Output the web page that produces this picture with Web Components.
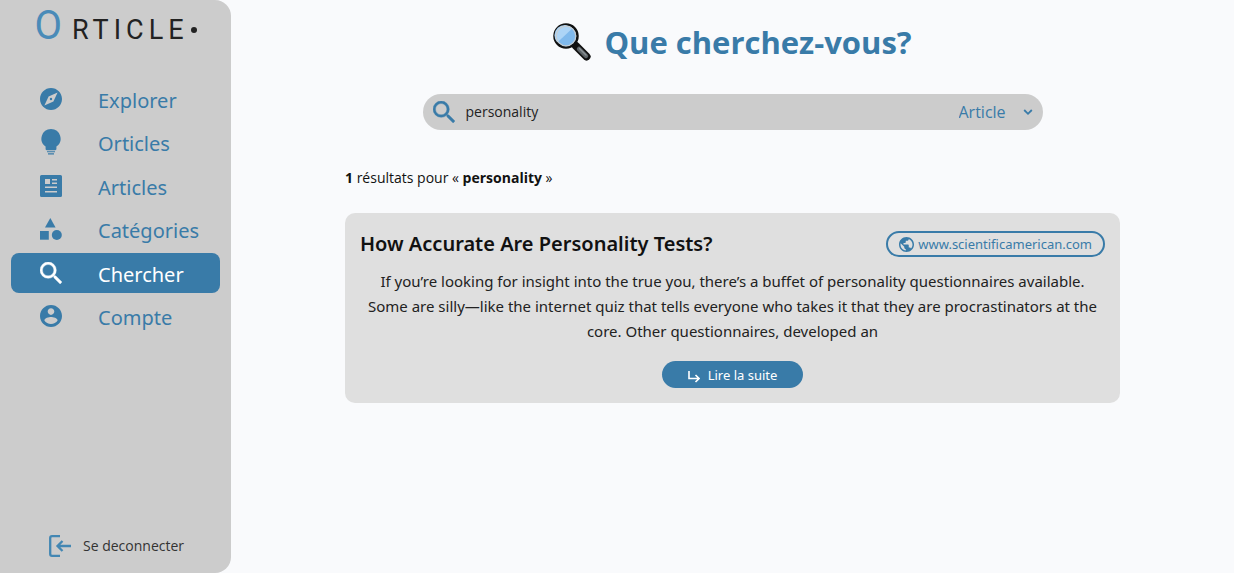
<!DOCTYPE html>
<html lang="fr">
<head>
<meta charset="utf-8">
<meta name="viewport" content="width=device-width, initial-scale=1">
<title>Orticle – Chercher</title>
<style>
  body { margin: 0; font-family: "Noto Sans", "Open Sans", sans-serif; color: #111; background: #f9fafc; --accent: #397ba8; --panel: #ccc; }
</style>
</head>
<body>
<orticle-app></orticle-app>
<script>
const ICONS = {
  explore: ['2 2 20 20', '<path d="M12 10.9a1.1 1.1 0 1 0 0 2.2 1.1 1.1 0 0 0 0-2.2zM12 2C6.48 2 2 6.48 2 12s4.48 10 10 10 10-4.48 10-10S17.52 2 12 2zm2.19 12.19L6 18l3.81-8.19L18 6l-3.81 8.19z"/>'],
  bulb: ['0 0 22 26', '<path d="M11 0a9.6 9.6 0 0 0-5.4 17.5V20c0 .7.5 1.200 1.200 1.200h8.400c.7 0 1.200-.5 1.200-1.200v-2.500A9.600 9.600 0 0 0 11 0z"/><path d="M7 22.300h8v1H7zM8 24.200h6v1.300H8z"/>'],
  news: ['0 0 22 22', '<path fill-rule="evenodd" d="M1.500 0h19A1.500 1.500 0 0 1 22 1.500v19a1.500 1.500 0 0 1-1.500 1.500h-19A1.500 1.500 0 0 1 0 20.500v-19A1.500 1.500 0 0 1 1.500 0zM5 4v5h5V4zm7 0v1.500h5V4zm0 3.500V9h5V7.500zM5 11.500V13h12v-1.500zM5 16v1.500h12V16z"/>'],
  category: ['0 0 22 22', '<path d="M10.300 0l5.300 9.400H5z"/><path d="M0 13h8.800v8.700H0z"/><circle cx="16.800" cy="17" r="5"/>'],
  search: ['3 3 17.500 17.500', '<path d="M15.500 14h-.79l-.28-.27A6.470 6.470 0 0 0 16 9.500 6.500 6.500 0 1 0 9.500 16c1.610 0 3.090-.59 4.230-1.570l.27.28v.79l5 4.990L20.490 19l-4.990-5zm-6 0C7.010 14 5 11.990 5 9.500S7.010 5 9.500 5 14 7.010 14 9.500 11.990 14 9.500 14z" stroke="currentColor" stroke-width=".3"/>'],
  account: ['2 2 20 20', '<path d="M12 2C6.480 2 2 6.480 2 12s4.480 10 10 10 10-4.480 10-10S17.520 2 12 2zm0 3c1.660 0 3 1.340 3 3s-1.340 3-3 3-3-1.340-3-3 1.340-3 3-3zm0 14.200c-2.500 0-4.710-1.280-6-3.220.03-1.990 4-3.080 6-3.080 1.990 0 5.970 1.090 6 3.080-1.290 1.940-3.500 3.220-6 3.220z"/>'],
  globe: ['2 2 20 20', '<path d="M12 2C6.480 2 2 6.480 2 12s4.480 10 10 10 10-4.480 10-10S17.520 2 12 2zm-1 17.930c-3.950-.49-7-3.850-7-7.930 0-.62.08-1.210.21-1.790L9 15v1c0 1.100.9 2 2 2v1.930zm6.900-2.540c-.26-.81-1-1.390-1.900-1.390h-1v-3c0-.55-.45-1-1-1H8v-2h2c.55 0 1-.45 1-1V7h2c1.100 0 2-.9 2-2v-.41c2.930 1.190 5 4.060 5 7.410 0 2.080-.8 3.970-2.100 5.390z"/>'],
  logout: ['0 0 22 22', '<path d="M11 1.200H3A1.800 1.800 0 0 0 1.200 3v16A1.800 1.800 0 0 0 3 20.800h8M22 11H9M13.500 6L8.500 11l5 5" fill="none" stroke="currentColor" stroke-width="2.300"/>'],
  chevron: ['0 0 10 10', '<path d="M1.200 3L5 6.800 8.800 3" fill="none" stroke="currentColor" stroke-width="1.800"/>'],
  reply: ['0 0 12 12', '<path d="M1 0v7.500h9.500M7.500 4l3.500 3.500L7.500 11" fill="none" stroke="currentColor" stroke-width="1.600"/>'],
  loupe: ['0 0 38 38', '<path d="M23 23l10.500 10.500" stroke="#111" stroke-width="8" stroke-linecap="round"/><path d="M26 26l7 7" stroke="#5d6367" stroke-width="4.500" stroke-linecap="round"/><path d="M26.500 25.500l6.500 6.500" stroke="#899094" stroke-width="1.500" stroke-linecap="round"/><circle cx="13" cy="13" r="11.500" fill="#80b9ec" stroke="#111" stroke-width="2.500"/><path d="M4.300 19.500A10 10 0 0 1 19.500 5.200z" fill="#add4f6"/><circle cx="13" cy="13" r="9.800" fill="none" stroke="#c5ccd1" stroke-width="1.200"/>']
};

function define(name, html) {
  const template = document.createElement('template');
  template.innerHTML = html;
  customElements.define(name, class extends HTMLElement {
    constructor() {
      super();
      this.attachShadow({ mode: 'open' }).append(template.content.cloneNode(true));
    }
  });
}

customElements.define('o-icon', class extends HTMLElement {
  connectedCallback() {
    if (this.shadowRoot) return;
    const [box, shape] = ICONS[this.getAttribute('name')];
    this.attachShadow({ mode: 'open' }).innerHTML =
      `<style>:host{display:block;flex:none;width:22px;height:22px}svg{display:block;width:100%;height:100%;fill:currentColor}</style>
       <svg viewBox="${box}" aria-hidden="true">${shape}</svg>`;
  }
});

define('o-logo', `
  <style>
    :host { display: block; }
    a { display: flex; align-items: baseline; justify-content: center; gap: 10px; font: 27px/52px Roboto, sans-serif; letter-spacing: 5px; color: #222; text-decoration: none; }
    .o { font-size: 40px; color: #4a8bb8; letter-spacing: 0; }
    .rest { display: flex; align-items: center; }
    .dot { width: 6px; height: 6px; border-radius: 50%; background: #222; margin-left: 2px; }
  </style>
  <a href="#"><span class="o">O</span><span class="rest">RTICLE<span class="dot"></span></span></a>`);

customElements.define('o-nav-item', class extends HTMLElement {
  connectedCallback() {
    if (this.shadowRoot) return;
    this.attachShadow({ mode: 'open' }).innerHTML = `
      <style>
        :host { display: block; color: var(--accent); }
        :host([active]) { color: #fff; }
        a { display: flex; align-items: center; gap: 36px; height: 40px; padding-left: 29px; border-radius: 8px; color: inherit; font-size: 20px; line-height: 40px; text-decoration: none; }
        :host([active]) a { background: var(--accent); }
        o-icon[name=bulb] { height: 26px; }
        span { margin-top: 4px; }
      </style>
      <a href="#"${this.hasAttribute('active') ? ' aria-current="page"' : ''}><o-icon name="${this.getAttribute('icon')}"></o-icon><span><slot></slot></span></a>`;
  }
});

define('o-sidebar', `
  <style>
    :host { display: flex; flex-direction: column; box-sizing: border-box; width: 231px; flex: none; padding: 0 11px 15px; background: var(--panel); border-radius: 0 16px 16px 0; }
    nav { display: flex; flex-direction: column; justify-content: space-between; min-height: 257px; margin-top: 23px; }
    button { display: flex; align-items: center; gap: 12px; margin: auto 0 0 38px; padding: 0; border: 0; background: none; color: #333; font: 14px/24px "Open Sans", sans-serif; }
    button o-icon { color: #4387b3; }
  </style>
  <o-logo></o-logo>
  <nav aria-label="Menu principal">
    <o-nav-item icon="explore">Explorer</o-nav-item>
    <o-nav-item icon="bulb">Orticles</o-nav-item>
    <o-nav-item icon="news">Articles</o-nav-item>
    <o-nav-item icon="category">Catégories</o-nav-item>
    <o-nav-item icon="search" active>Chercher</o-nav-item>
    <o-nav-item icon="account">Compte</o-nav-item>
  </nav>
  <button type="button"><o-icon name="logout"></o-icon>Se deconnecter</button>`);

define('o-search', `
  <style>
    :host { display: block; width: 80%; color: var(--accent); }
    form { display: flex; align-items: center; height: 36px; padding: 0 10px; border-radius: 18px; background: var(--panel); }
    input { flex: 1; min-width: 0; margin-left: 11px; padding: 0; border: 0; outline: 0; background: none; color: #222; font: 14px/24px "Open Sans", sans-serif; }
    .kind { display: grid; grid-template-columns: 1fr 10px; align-items: center; }
    select { grid-area: 1 / 1 / 2 / 3; appearance: none; margin: 0; padding: 0 26px 0 0; border: 0; outline: 0; background: none; color: inherit; font: 16px/24px "Open Sans", sans-serif; }
    .kind o-icon { grid-area: 1 / 2; width: 10px; height: 10px; pointer-events: none; }
  </style>
  <form role="search">
    <o-icon name="search"></o-icon>
    <input type="text" value="personality" aria-label="Recherche">
    <div class="kind"><select aria-label="Type de contenu"><option>Article</option></select><o-icon name="chevron"></o-icon></div>
  </form>`);

define('o-result', `
  <style>
    :host { display: block; box-sizing: border-box; padding: 15px; border-radius: 10px; background: #dfdfdf; text-align: center; }
    header { display: flex; justify-content: space-between; align-items: center; gap: 16px; }
    h2 { margin: 0; font-size: 20px; line-height: 32px; font-weight: 600; color: #111; }
    .source { display: flex; align-items: center; gap: 4px; padding: 0 11px; border: 2px solid var(--accent); border-radius: 13px; color: var(--accent); font-size: 13px; line-height: 22px; text-decoration: none; }
    .source o-icon { width: 15px; height: 15px; }
    p { margin: 9px 0 17px; font-size: 15px; line-height: 25px; color: #222; }
    button { display: inline-flex; align-items: center; gap: 8px; height: 27px; padding: 0 26px; border: 0; border-radius: 14px; background: var(--accent); color: #fff; font: 13px/26px "Noto Sans", sans-serif; vertical-align: top; }
    button o-icon { width: 12px; height: 12px; margin-top: 4px; }
  </style>
  <article>
    <header>
      <h2><slot name="title"></slot></h2>
      <a class="source" href="#"><o-icon name="globe"></o-icon><slot name="source"></slot></a>
    </header>
    <p><slot></slot></p>
    <button type="button"><o-icon name="reply"></o-icon>Lire la suite</button>
  </article>`);

define('orticle-app', `
  <style>
    :host { display: flex; min-height: 100vh; }
    main { flex: 1; min-width: 0; display: flex; flex-direction: column; align-items: center; padding: 18px 114px; }
    h1 { display: flex; align-items: center; gap: 13px; margin: 0; color: var(--accent); font: 700 31px/48px "Open Sans", sans-serif; }
    h1 o-icon { width: 38px; height: 38px; }
    o-search { margin-top: 28px; }
    .count { align-self: stretch; margin: 36px 0 23px; font: 14px/24px "Open Sans", sans-serif; }
    o-result { align-self: stretch; }
  </style>
  <o-sidebar></o-sidebar>
  <main>
    <h1><o-icon name="loupe"></o-icon>Que cherchez-vous?</h1>
    <o-search></o-search>
    <p class="count"><b>1</b> résultats pour « <b>personality</b> »</p>
    <o-result>
      <span slot="title">How Accurate Are Personality Tests?</span>
      <span slot="source">www.scientificamerican.com</span>
      If you’re looking for insight into the true you, there’s a buffet of personality questionnaires available. Some are silly—like the internet quiz that tells everyone who takes it that they are procrastinators at the core. Other questionnaires, developed an
    </o-result>
  </main>`);
</script>
</body>
</html>
